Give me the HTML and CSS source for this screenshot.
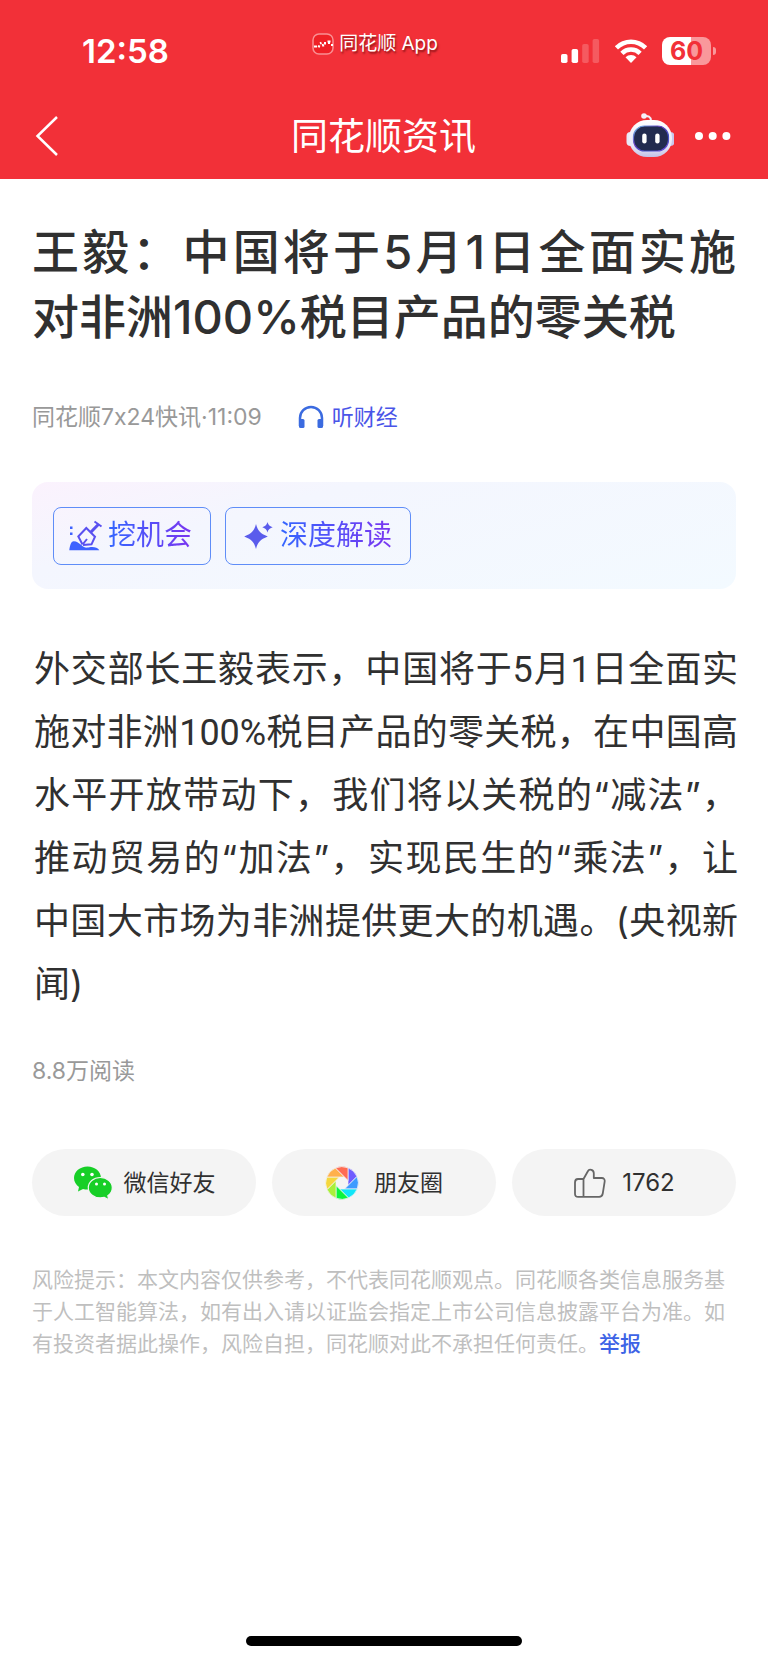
FILE: index.html
```html
<!DOCTYPE html>
<html lang="zh-CN">
<head>
<meta charset="utf-8">
<meta name="viewport" content="width=device-width, initial-scale=1">
<title>同花顺资讯</title>
<link rel="stylesheet" href="styles.css">
</head>
<body>
<header class="header">
  <div class="status">
    <time class="clock">12:58</time>
    <div class="app-label">
      <svg width="22" height="22" viewBox="0 0 22 22" aria-hidden="true">
        <rect x="1" y="1" width="20" height="20" rx="6" fill="#ef2026" stroke="#f98f92" stroke-width="1.5"/>
        <path d="M2 13.5h3M6 13l2 .8M8 10.500l1.500-.8M10.500 11l1 2.500M13 9v2.500M15.500 8.500h3M16 10h2M20 11v2" stroke="#fff" stroke-width="2" fill="none"/>
      </svg>
      <span>同花顺 App</span>
    </div>
    <div class="indicators">
      <svg width="40" height="26" viewBox="0 0 40 26" aria-label="信号" role="img">
        <rect x="1" y="16" width="6.500" height="9" rx="1.800" fill="#fff"/>
        <rect x="11.600" y="11" width="6.500" height="14" rx="1.800" fill="#fff"/>
        <rect x="22.200" y="6" width="6.500" height="19" rx="1.800" fill="#f55a60"/>
        <rect x="32.600" y="1" width="6.500" height="24" rx="1.800" fill="#f55a60"/>
      </svg>
      <svg width="34" height="26" viewBox="0 0 34 26" aria-label="无线网络" role="img">
        <path d="M.8 8.200a23 23 0 0 1 32.400 0L30 11.500a18.400 18.400 0 0 0-26 0z" fill="#fff"/>
        <path d="M6.300 13.700a15.200 15.200 0 0 1 21.400 0l-3.200 3.200a10.700 10.700 0 0 0-15 0z" fill="#fff"/>
        <path d="M11.500 19.200a7.800 7.800 0 0 1 11 0L17 25z" fill="#fff"/>
      </svg>
      <div class="battery">60</div>
    </div>
  </div>
  <nav class="navbar">
    <button class="icon-button back" aria-label="返回">
      <svg width="24" height="42" viewBox="0 0 24 42"><path d="M22 2L2.500 21 22 40" fill="none" stroke="#fff" stroke-width="2.500"/></svg>
    </button>
    <div class="nav-title">同花顺资讯</div>
    <div class="nav-actions">
      <button class="icon-button" aria-label="智能助手">
        <svg width="48" height="46" viewBox="625 112 48 46">
          <defs>
            <linearGradient id="shell" x1="0" y1="0" x2="0" y2="1"><stop offset="0" stop-color="#fff"/><stop offset=".7" stop-color="#e8e7f7"/><stop offset="1" stop-color="#c3c2e6"/></linearGradient>
            <linearGradient id="rim" x1="0" y1="0" x2="1" y2="1"><stop offset="0" stop-color="#6fc5e8"/><stop offset=".4" stop-color="#6a3fc4"/><stop offset=".7" stop-color="#3b4fc0"/><stop offset="1" stop-color="#7c4be0"/></linearGradient>
          </defs>
          <path d="M643 115c4-.5 7 .5 7 5" fill="none" stroke="#f3eefa" stroke-width="2"/>
          <circle cx="643" cy="115" r="2.800" fill="#f5f0fb"/>
          <rect x="625.500" y="131" width="8" height="14" rx="4" fill="#e9e8f7"/>
          <rect x="665.500" y="131" width="8" height="14" rx="4" fill="#c9c7ec"/>
          <rect x="628" y="119" width="43" height="37" rx="18" fill="url(#shell)"/>
          <rect x="632.500" y="125" width="35" height="25" rx="11" fill="#222b4f" stroke="url(#rim)" stroke-width="1.200"/>
          <rect x="641.200" y="132.500" width="4.400" height="10" rx="2.200" fill="#fff"/>
          <rect x="654.200" y="132.500" width="4.400" height="10" rx="2.200" fill="#fff"/>
        </svg>
      </button>
      <button class="icon-button" aria-label="更多">
        <svg width="38" height="10" viewBox="0 0 38 10" fill="#fff"><circle cx="5" cy="5" r="4"/><circle cx="18.700" cy="5" r="4"/><circle cx="32.400" cy="5" r="4"/></svg>
      </button>
    </div>
  </nav>
</header>

<main class="article">
  <h1 class="headline">王毅：中国将于5月1日全面实施对非洲100%税目产品的零关税</h1>
  <div class="meta">
    <span>同花顺7x24快讯·11:09</span>
    <a class="listen" href="#listen">
      <svg width="26" height="24" viewBox="0 0 26 24" aria-hidden="true"><path d="M2 21V13a11 11 0 0 1 22 0v8" fill="none" stroke="#3b6be0" stroke-width="2.500"/><rect x="1" y="14" width="5.500" height="9" rx="1.500" fill="#3b6be0"/><rect x="19.500" y="14" width="5.500" height="9" rx="1.500" fill="#3b6be0"/></svg>
      <span>听财经</span>
    </a>
  </div>

  <section class="ai-panel" aria-label="智能解读">
    <button class="ai-button">
      <svg width="34" height="32" viewBox="0 0 34 32" aria-hidden="true">
        <g fill="none" stroke="#5a50f0" stroke-width="2"><path d="M13.500 24.500L9.300 16.500 17.300 8 26 16.700 22.500 24.300 14 25M14 24l4-5"/><path d="M22 12l7.300-7.500" stroke-width="3"/><path d="M25.500 1.500l7 5"/></g>
        <path d="M.3 30.300c.5-4 1.500-9 4.500-9 3 0 4.500 1.500 6.500 3 2 1.400 4 4 7 3.300 3-.8 10-1.600 12 2.700zM1 6.500h2.500V9H1zM1 12.500h2.500V15H1z" fill="#3e62ff"/>
      </svg>
      <span class="ai-text">挖机会</span>
    </button>
    <button class="ai-button">
      <svg width="34" height="30" viewBox="-2 0 34 30" fill="#5a5cec" aria-hidden="true"><path d="M13 3c1.700 6.500 4 9.500 11.800 12.500C17 18.500 14.700 21.500 13 28 11.300 21.500 9 18.500 1.200 15.500 9 12.500 11.300 9.500 13 3z"/><path d="M24.500 1c.8 2.800 1.800 4 5.200 5.200-3.400 1.200-4.400 2.400-5.200 5.200-.8-2.800-1.800-4-5.200-5.200C22.700 5 23.700 3.800 24.500 1z"/></svg>
      <span class="ai-text">深度解读</span>
    </button>
  </section>

  <p class="body-text">外交部长王毅表示，中国将于<span class="num">5</span>月<span class="num">1</span>日全面实施对非洲<span class="num">100%</span>税目产品的零关税，在中国高水平开放带动下，我们将以关税的“减法”，推动贸易的“加法”，实现民生的“乘法”，让中国大市场为非洲提供更大的机遇。(央视新闻)</p>
  <div class="reads">8.8万阅读</div>

  <div class="actions">
    <button class="pill">
      <svg width="40" height="35" viewBox="0 0 40 35" aria-hidden="true">
        <path d="M14.500 1.500C7 1.500 1 6.600 1 13.100c0 3.700 2 6.900 5 9L5 26.500l5-2.600c1.500.4 3 .6 4.500.6 7.500 0 13.500-5.100 13.500-11.500S22 1.500 14.500 1.500z" fill="#17cf27"/>
        <path d="M27.300 12.500c-6.800 0-12 4.500-12 10.200s5.200 10.200 12 10.200c1.400 0 2.700-.2 4-.5l4.500 2.300-1-3.900c2.700-1.900 4.500-4.800 4.500-8.100 0-5.700-5.200-10.200-12-10.200z" fill="#17cf27" stroke="#f4f4f4" stroke-width="1.200"/>
        <g fill="#fff"><circle cx="9.800" cy="9.500" r="1.800"/><circle cx="19" cy="9.500" r="1.800"/><circle cx="23.500" cy="19" r="1.500"/><circle cx="31.500" cy="19" r="1.500"/></g>
      </svg>
      <span class="pill-label">微信好友</span>
    </button>
    <button class="pill pill-wide">
      <svg width="34" height="34" viewBox="-17 -17 34 34" stroke="#f4f4f4" stroke-width=".7" aria-hidden="true">
        <defs><path id="blade" d="M6 2.500V-15.200A16.300 16.300 0 0 1 15-6.500z"/></defs>
        <use href="#blade" fill="#6f5cff"/>
        <use href="#blade" fill="#3d9bff" transform="rotate(45)"/>
        <use href="#blade" fill="#10e6f8" transform="rotate(90)"/>
        <use href="#blade" fill="#0af53c" transform="rotate(135)"/>
        <use href="#blade" fill="#a9f03a" transform="rotate(180)"/>
        <use href="#blade" fill="#f5d73c" transform="rotate(225)"/>
        <use href="#blade" fill="#ffb04b" transform="rotate(270)"/>
        <use href="#blade" fill="#ff6b52" transform="rotate(315)"/>
      </svg>
      <span class="pill-label">朋友圈</span>
    </button>
    <button class="pill pill-wide">
      <svg width="34" height="32" viewBox="0 0 34 32" fill="none" stroke="#666" stroke-width="1.800" stroke-linejoin="round" aria-hidden="true"><path d="M10.500 12L15 4c1.200-2.500 5.800-1.500 5.800 2.200V11h8c2 0 3.200 1.500 2.900 3.300l-2 12.500c-.4 2-1.600 3-3.500 3H5.200c-2.200 0-3.200-1-3.200-3V15.500c0-2 1-3.500 3-3.500zM10.500 12v17.500"/></svg>
      <span class="count">1762</span>
    </button>
  </div>

  <p class="disclaimer">风险提示：本文内容仅供参考，不代表同花顺观点。同花顺各类信息服务基于人工智能算法，如有出入请以证监会指定上市公司信息披露平台为准。如有投资者据此操作，风险自担，同花顺对此不承担任何责任。<a class="report" href="#report">举报</a></p>
</main>
<div class="home-bar"></div>
</body>
</html>
```
FILE: styles.css
```css
* {
  box-sizing: border-box;
}

body {
  margin: 0;
  min-height: 100vh;
  display: flex;
  flex-direction: column;
  background: #fff;
  color: #303030;
  font-family: Inter, "Noto Sans CJK SC", sans-serif;
}

button {
  margin: 0;
  padding: 0;
  border: 0;
  background: none;
  color: inherit;
  font: inherit;
}

svg {
  display: block;
  flex: none;
}

a {
  text-decoration: none;
}

.header {
  background: #f23038;
  color: #fff;
}

.status {
  display: grid;
  grid-template-columns: 1fr auto 1fr;
  align-items: center;
  height: 94px;
  padding: 8px 57px 0 39px;
}

.clock {
  padding-left: 43px;
  font-size: 33px;
  font-weight: 600;
  line-height: 40px;
}

.app-label {
  display: flex;
  align-items: center;
  gap: 5px;
  padding-bottom: 14px;
  font-size: 19px;
  line-height: 24px;
  text-shadow: 1px 2px 2px rgba(70, 0, 0, 0.6);
}

.indicators {
  display: flex;
  align-items: center;
  justify-content: flex-end;
  gap: 14px;
}

.battery {
  position: relative;
  width: 49px;
  height: 28px;
  border-radius: 8px;
  background: linear-gradient(90deg, #fff 60%, #f9989b 60%);
  color: #f23038;
  font-size: 25px;
  font-weight: 700;
  line-height: 28px;
  text-align: center;
}

.battery::after {
  content: "";
  position: absolute;
  top: 10px;
  right: -5px;
  width: 3px;
  height: 8px;
  border-radius: 0 3px 3px 0;
  background: #f9989b;
}

.navbar {
  display: grid;
  grid-template-columns: 1fr auto 1fr;
  align-items: center;
  height: 85px;
  padding: 0 36px 2px 35px;
}

.icon-button {
  display: block;
}

.nav-title {
  padding-top: 2px;
  font-size: 37px;
  line-height: 48px;
}

.nav-actions {
  display: flex;
  align-items: center;
  justify-content: flex-end;
  gap: 20px;
}

.article {
  flex: 1;
  padding: 40px 32px;
}

.headline {
  margin: 0;
  font-size: 47px;
  font-weight: 500;
  line-height: 65px;
  text-align: justify;
}

.meta {
  display: flex;
  align-items: center;
  gap: 36px;
  margin-top: 50px;
  color: #999;
  font-size: 23px;
  line-height: 36px;
}

.listen {
  display: flex;
  align-items: center;
  gap: 8px;
  color: #4a55e8;
  font-size: 22px;
}

.ai-panel {
  display: flex;
  gap: 14px;
  margin-top: 47px;
  padding: 25px 21px 24px;
  border-radius: 16px;
  background: linear-gradient(165deg, #fbf2fd 0%, #f4f6fe 30%, #f3faff 100%);
}

.ai-button {
  display: flex;
  align-items: center;
  gap: 5px;
  height: 58px;
  padding: 0 18px 0 15px;
  border: 1px solid #5f8df8;
  border-radius: 8px;
}

.ai-text {
  padding-bottom: 2px;
  background: linear-gradient(90deg, #3366ff, #7a35f0);
  background-clip: text;
  color: transparent;
  font-size: 28px;
  line-height: 40px;
}

.body-text {
  margin: 49px -2px 0 0;
  padding-left: 2px;
  font-size: 36px;
  line-height: 63px;
  text-align: justify;
}

.num {
  font-family: Roboto, sans-serif;
  line-height: 1;
}

.reads {
  margin-top: 39px;
  color: #999;
  font-size: 23px;
  line-height: 32px;
}

.actions {
  display: grid;
  grid-template-columns: repeat(3, 1fr);
  gap: 16px;
  margin-top: 62px;
}

.pill {
  display: flex;
  align-items: center;
  justify-content: center;
  gap: 11px;
  height: 67px;
  border-radius: 34px;
  background: #f4f4f4;
  font-size: 23px;
}

.pill-wide {
  gap: 15px;
}

.pill-label {
  padding-bottom: 3px;
}

.count {
  font-size: 24px;
}

.disclaimer {
  margin: 48px 0 0;
  color: #bfbfbf;
  font-size: 21px;
  line-height: 32px;
}

.report {
  display: inline-block;
  color: #3d63e6;
  font-weight: 500;
}

.home-bar {
  align-self: center;
  width: 36%;
  height: 10px;
  margin-bottom: 17px;
  border-radius: 5px;
  background: #000;
}
```
